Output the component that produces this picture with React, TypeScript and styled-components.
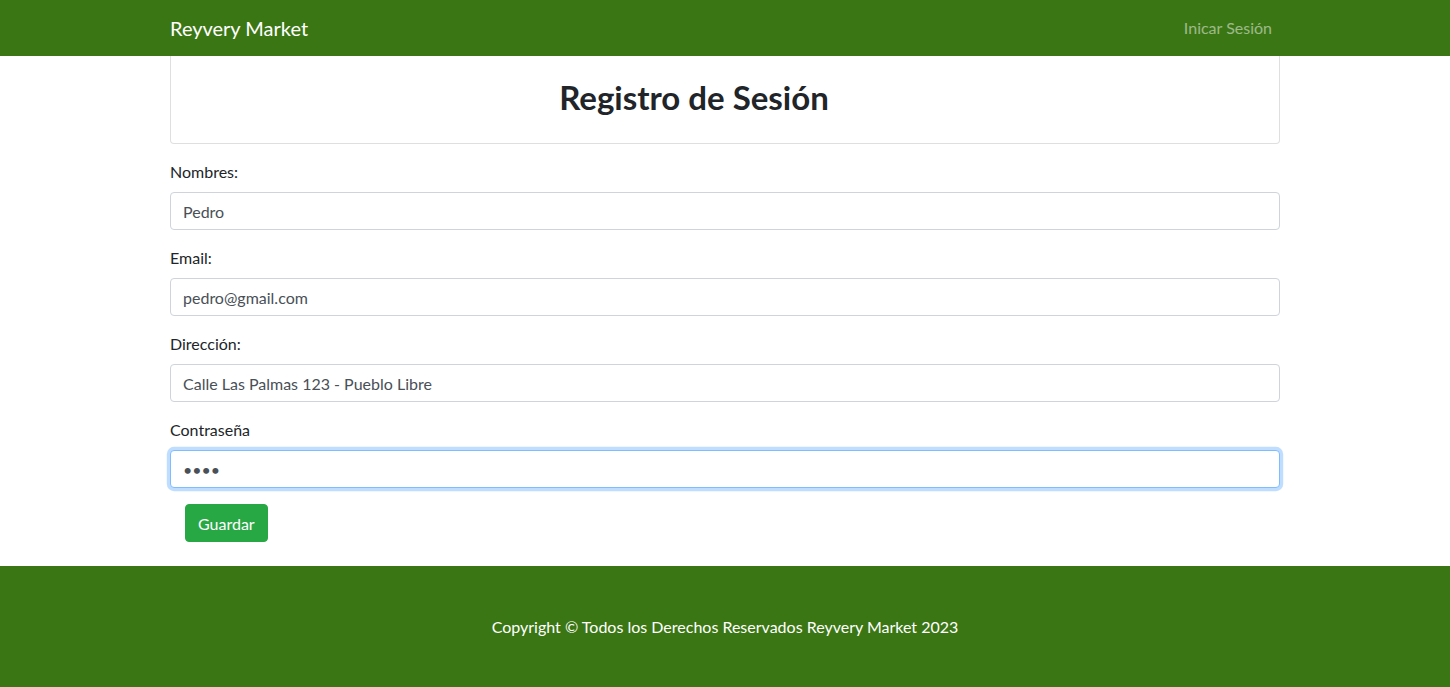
import React from "react";
import styled, { createGlobalStyle } from "styled-components";

const Global = createGlobalStyle`
  * { box-sizing: border-box; }
  body {
    margin: 0;
    font-family: Lato, "Noto Sans", sans-serif;
    font-size: 16px;
    line-height: 1.5;
    color: #212529;
    background: #fff;
  }
`;

const Navbar = styled.nav`
  background: #3b7615;
  height: 56px;
`;

const Container = styled.div`
  width: 1140px;
  margin: 0 auto;
  padding: 0 15px;
`;

const NavInner = styled(Container)`
  height: 56px;
  display: flex;
  align-items: center;
  justify-content: space-between;
`;

const Brand = styled.a`
  color: #fff;
  font-size: 20px;
  line-height: 30px;
  text-decoration: none;
`;

const NavLink = styled.a`
  color: rgba(255, 255, 255, 0.5);
  font-size: 16px;
  padding: 8px;
  text-decoration: none;
`;

const Card = styled.div`
  border: 1px solid rgba(0, 0, 0, 0.125);
  border-top: none;
  border-radius: 0 0 4px 4px;
  padding: 22px 62px 19px 0;
  text-align: center;
`;

const Title = styled.h2`
  margin: 0 0 8px;
  font-size: 33px;
  line-height: 38px;
  font-weight: 700;
`;

const Form = styled.form`
  padding-top: 16px;
`;

const Group = styled.div`
  margin-bottom: 16px;
`;

const Label = styled.label`
  display: block;
  margin-bottom: 8px;
  line-height: 24px;
`;

const Input = styled.input<{ $focused?: boolean }>`
  display: block;
  width: 100%;
  height: 38px;
  padding: 6px 12px;
  font-family: inherit;
  font-size: 16px;
  color: #495057;
  caret-color: #212529;
  background: #fff;
  border: 1px solid ${(p) => (p.$focused ? "#80bdff" : "#ced4da")};
  border-radius: 4px;
  box-shadow: ${(p) => (p.$focused ? "0 0 0 3.2px rgba(0,123,255,.25)" : "none")};
  outline: none;
`;

const Button = styled.button`
  margin-left: 15px;
  height: 38px;
  padding: 6px 12px;
  font-family: inherit;
  font-size: 16px;
  color: #fff;
  background: #28a745;
  border: 1px solid #28a745;
  border-radius: 4px;
`;

const Footer = styled.footer`
  margin-top: 24px;
  background: #3b7615;
  height: 121px;
  display: flex;
  align-items: center;
  justify-content: center;
  color: #fff;
`;

export default function App() {
  return (
    <>
      <Global />
      <Navbar>
        <NavInner>
          <Brand href="#">Reyvery Market</Brand>
          <NavLink href="#">Inicar Sesión</NavLink>
        </NavInner>
      </Navbar>
      <Container>
        <Card>
          <Title>Registro de Sesión</Title>
        </Card>
        <Form onSubmit={(e) => e.preventDefault()}>
          <Group>
            <Label>Nombres:</Label>
            <Input defaultValue="Pedro" />
          </Group>
          <Group>
            <Label>Email:</Label>
            <Input defaultValue="pedro@gmail.com" />
          </Group>
          <Group>
            <Label>Dirección:</Label>
            <Input defaultValue="Calle Las Palmas 123 - Pueblo Libre" />
          </Group>
          <Group>
            <Label>Contraseña</Label>
            <Input type="password" defaultValue="1234" $focused autoFocus />
          </Group>
          <Button type="submit">Guardar</Button>
        </Form>
      </Container>
      <Footer>Copyright © Todos los Derechos Reservados Reyvery Market 2023</Footer>
    </>
  );
}
